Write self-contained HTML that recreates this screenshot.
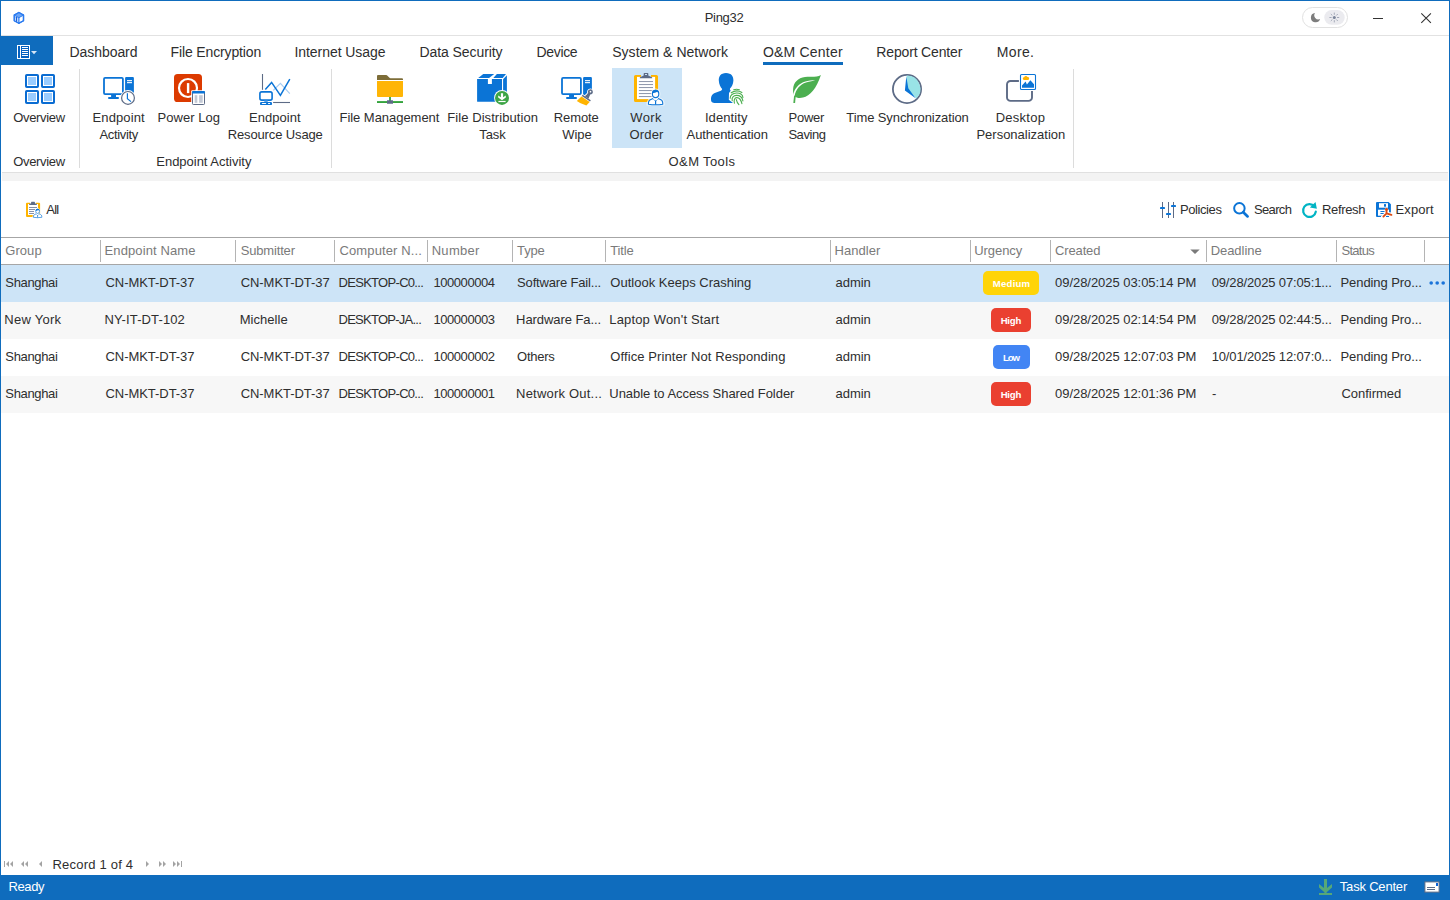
<!DOCTYPE html>
<html><head><meta charset="utf-8"><title>Ping32</title>
<style>
html,body{margin:0;padding:0;}
body{width:1450px;height:900px;position:relative;overflow:hidden;background:#fff;font-family:"Liberation Sans",sans-serif;}
.b{position:absolute;}
.t{position:absolute;white-space:nowrap;line-height:20px;height:20px;}
.i{position:absolute;overflow:visible;}
.vs{position:absolute;width:1px;background:#dcdcdc;top:69px;height:99px;}
.hs{position:absolute;width:1px;background:#b4b4b4;top:240px;height:22px;}
</style></head><body>
<!-- window frame -->
<div class="b" style="left:0;top:0;width:1450px;height:1px;background:#0f6cbd"></div>
<div class="b" style="left:0;top:0;width:1px;height:900px;background:#0f6cbd"></div>
<div class="b" style="left:1449px;top:0;width:1px;height:900px;background:#0f6cbd"></div>
<!-- title separator -->
<div class="b" style="left:1px;top:35px;width:1448px;height:1px;background:#e2e2e2"></div>
<!-- menu button -->
<div class="b" style="left:1px;top:36px;width:52px;height:29px;background:#0f6cbd"></div>
<!-- active tab underline -->
<div class="b" style="left:763px;top:62px;width:80px;height:3px;background:#0f6cbd"></div>
<!-- ribbon -->
<div class="b" style="left:612px;top:68px;width:70px;height:80px;background:#cce4f7"></div>
<div class="vs" style="left:79px"></div><div class="vs" style="left:331px"></div><div class="vs" style="left:1073px"></div>
<div class="b" style="left:2px;top:172px;width:1446px;height:1px;background:#e0e0e0"></div>
<div class="b" style="left:2px;top:173px;width:1446px;height:8px;background:#f3f3f3"></div>
<!-- grid -->
<div class="b" style="left:1px;top:237px;width:1448px;height:1px;background:#a6a6a6"></div>
<div class="b" style="left:1px;top:264px;width:1448px;height:1px;background:#a6a6a6"></div>
<div class="hs" style="left:100px"></div><div class="hs" style="left:235px"></div><div class="hs" style="left:334px"></div>
<div class="hs" style="left:427px"></div><div class="hs" style="left:512px"></div><div class="hs" style="left:605px"></div>
<div class="hs" style="left:830px"></div><div class="hs" style="left:970px"></div><div class="hs" style="left:1050px"></div>
<div class="hs" style="left:1206px"></div><div class="hs" style="left:1336px"></div><div class="hs" style="left:1424px"></div>
<div class="b" style="left:1px;top:265px;width:1448px;height:37px;background:#cde4f7"></div>
<div class="b" style="left:1px;top:302px;width:1448px;height:37px;background:#f7f7f7"></div>
<div class="b" style="left:1px;top:376px;width:1448px;height:37px;background:#f7f7f7"></div>
<!-- badges -->
<div class="b" style="left:983px;top:271px;width:56px;height:24px;border-radius:5px;background:#ffd408"></div>
<div class="b" style="left:991px;top:308px;width:40px;height:24px;border-radius:5px;background:#ea4030"></div>
<div class="b" style="left:993px;top:345px;width:37px;height:24px;border-radius:5px;background:#4285f4"></div>
<div class="b" style="left:991px;top:382px;width:40px;height:24px;border-radius:5px;background:#ea4030"></div>
<!-- status bar -->
<div class="b" style="left:0;top:875px;width:1450px;height:25px;background:#0f6cbd"></div>
<svg class="i" style="left:0;top:0" width="1450" height="900" viewBox="0 0 1450 900"><g fill="none" stroke="#2b7bf0" stroke-width="1.3" stroke-linejoin="round" stroke-linecap="round">
<path d="M18.9 12.5 L23.5 15.1 V20.7 L18.9 23.3 L14.3 20.7 V15.1 Z" fill="#fff"/>
<path d="M18.9 12.5 L23.5 15.1 L18.9 17.7 L14.3 15.1 Z" fill="#6aa5f6" stroke="none"/>
<path d="M14.3 15.1 L18.9 17.7 V23.3 L14.3 20.7 Z" fill="#c9defc" stroke="none"/>
<path d="M18.9 12.5 L23.5 15.1 V20.7 L18.9 23.3 L14.3 20.7 V15.1 Z"/>
<path d="M14.3 15.1 L18.9 17.7 L23.5 15.1" stroke-width="1"/>
<path d="M18.9 17.7 V23.3" stroke-width="1.2"/>
<path d="M16.5 17.2 V21.2" stroke="#1c62d8" stroke-width="1.1"/>
</g>
<g>
<rect x="17.5" y="45.5" width="12" height="13" fill="#0561c0" stroke="#fff" stroke-width="1"/>
<rect x="20" y="46" width="1" height="12" fill="#fff"/>
<g fill="#fff"><rect x="22" y="47" width="6" height="1"/><rect x="22" y="49" width="6" height="1"/><rect x="22" y="51" width="6" height="1"/><rect x="22" y="53" width="6" height="1"/><rect x="22" y="55" width="6" height="1"/></g>
<path d="M31 51 H37 L34 54.2 Z" fill="#d7e6f6"/>
</g>
<rect x="26" y="75" width="12" height="12" rx="0.8" fill="#fff" stroke="#0a6cd2" stroke-width="2"/><rect x="28" y="77" width="8" height="8" fill="#99ccff"/>
<rect x="42" y="75" width="12" height="12" rx="0.8" fill="#fff" stroke="#0a6cd2" stroke-width="2"/><rect x="44" y="77" width="8" height="8" fill="#99ccff"/>
<rect x="26" y="91" width="12" height="12" rx="0.8" fill="#fff" stroke="#0a6cd2" stroke-width="2"/><rect x="28" y="93" width="8" height="8" fill="#99ccff"/>
<rect x="42" y="91" width="12" height="12" rx="0.8" fill="#fff" stroke="#0a6cd2" stroke-width="2"/><rect x="44" y="93" width="8" height="8" fill="#99ccff"/>
<g transform="translate(0 0)">
<rect x="104" y="77.9" width="18.9" height="16.2" rx="1.1" fill="#fff" stroke="#0b74d6" stroke-width="1.8"/>
<rect x="111.1" y="94.5" width="4.9" height="3" fill="#0b74d6"/>
<rect x="108" y="97" width="11" height="2" rx="1" fill="#0b74d6"/>
<rect x="125.1" y="77" width="8.8" height="18" rx="1" fill="#0b74d6"/>
<rect x="127" y="80.1" width="5" height="1.1" fill="#fff"/><rect x="127" y="82.1" width="5" height="1.1" fill="#fff"/>
</g>
<circle cx="128" cy="97.9" r="7.8" fill="#fff"/>
<circle cx="128" cy="97.9" r="6.4" fill="#fff" stroke="#5d6b86" stroke-width="1.2"/>
<path d="M127.4 93.2 V98.6 L131 101.6" fill="none" stroke="#0b74d6" stroke-width="1.2" stroke-linejoin="miter"/>
<rect x="174" y="74" width="28" height="28" rx="3.6" fill="#dc3a00"/>
<circle cx="188" cy="88" r="9" fill="none" stroke="#fff" stroke-width="2.2"/>
<rect x="186.9" y="83.1" width="2.4" height="10" fill="#fff"/>
<rect x="191.2" y="90.2" width="14.4" height="15.4" rx="1" fill="#fff"/>
<rect x="192.5" y="91.5" width="12" height="13" rx="0.8" fill="#fff" stroke="#5d6b86" stroke-width="1"/>
<path d="M192 92 q0 -1 1 -1 h11 q1 0 1 1 v1.6 h-13 Z" fill="#0b74d6"/>
<rect x="194.7" y="95.2" width="2.6" height="7.6" fill="#c3c9d5"/><rect x="199.1" y="95.2" width="3.6" height="7.6" fill="#c3c9d5"/>
<path d="M262.5 74 V89.8" stroke="#5d6b86" stroke-width="1.1"/>
<path d="M273.1 102.5 H290" stroke="#5d6b86" stroke-width="1.1"/>
<path d="M273.3 90.4 L280.4 83.3 L289.8 93.6" fill="none" stroke="#a9cdf2" stroke-width="1.2"/>
<path d="M265.3 89.6 L271.6 82.4 L280.4 95.3 L289.8 79.1" fill="none" stroke="#0b74d6" stroke-width="1.5" stroke-linejoin="miter"/>
<rect x="259.9" y="91.9" width="12.2" height="8.2" rx="1.8" fill="#fff" stroke="#0b74d6" stroke-width="1.6"/>
<rect x="264.3" y="100.5" width="3.4" height="1.6" fill="#5ba3e8"/>
<rect x="260" y="102" width="12" height="3.1" rx="1.2" fill="#0b74d6"/>
<rect x="261.8" y="103.1" width="4.4" height="1" rx=".5" fill="#fff"/><rect x="268" y="103.1" width="2.2" height="1" rx=".5" fill="#fff"/>
<path d="M377 76.1 q0 -1 1 -1 h8.3 q.5 0 .9 .4 l2.3 2.3 q.4 .4 .9 .4 h11.6 q1 0 1 1 v.7 H377 Z" fill="#7d6d38"/>
<path d="M377 81.1 H403 V95.9 q0 1 -1 1 H378 q-1 0 -1 -1 Z" fill="#ffb506"/>
<rect x="389.1" y="97" width="1.8" height="4" fill="#34a33c"/>
<rect x="377" y="101.1" width="26" height="1.9" fill="#34a33c"/>
<rect x="387" y="100.2" width="6" height="3.6" rx=".4" fill="#5d6b86"/>
<path d="M477.1 79.1 H487.9 V84 H491.9 V79.1 H502 V101.8 H477.6 q-.5 0 -.5 -.5 Z" fill="#0b74d6"/>
<path d="M478.2 77.9 L483.3 74.1 H494.2 L489.1 77.9 Z" fill="#0b74d6"/>
<path d="M493.3 77.9 L496.9 74.1 H506 L502.7 77.9 Z" fill="#0b74d6"/>
<path d="M503.1 79.3 L506.9 75.3 V95 H503.1 Z" fill="#0b74d6"/>
<circle cx="502" cy="97.9" r="7.9" fill="#fff"/>
<circle cx="502" cy="97.9" r="7" fill="#3da546"/>
<path d="M500.9 93.3 H503.1 V97.2 L505.8 95.6 V97.6 L502 100.3 L498.2 97.6 V95.6 L500.9 97.2 Z" fill="#fff"/>
<rect x="498.4" y="100.9" width="7.2" height="1.2" fill="#fff"/>
<g transform="translate(458 0)">
<rect x="104" y="77.9" width="18.9" height="16.2" rx="1.1" fill="#fff" stroke="#0b74d6" stroke-width="1.8"/>
<rect x="111.1" y="94.5" width="4.9" height="3" fill="#0b74d6"/>
<rect x="108" y="97" width="11" height="2" rx="1" fill="#0b74d6"/>
<rect x="125.1" y="77" width="8.8" height="18" rx="1" fill="#0b74d6"/>
<rect x="127" y="80.1" width="5" height="1.1" fill="#fff"/><rect x="127" y="82.1" width="5" height="1.1" fill="#fff"/>
</g>
<g transform="translate(586.3 98.15) rotate(33)">
<path d="M-5.6 -1.4 H5.6 V1 L5 7 L-7 8.2 Z" fill="#fff"/>
<path d="M-2.2 -0.7 C-2 -2.6 -1.2 -3.6 -1.4 -5.6 A2.4 2.4 0 1 1 1.4 -5.6 C1.2 -3.6 2 -2.6 2.2 -0.7 Z" fill="#5d6b86" stroke="#fff" stroke-width="1.8" paint-order="stroke"/>
<path d="M-4.9 -0.75 H4.9 V0.7 H-4.9 Z" fill="#5d6b86"/>
<circle cx="0" cy="-7.7" r="0.85" fill="#fff"/>
<path d="M-4.9 1.3 H4.9 L4.1 6.2 Q2 6.2 0 6.9 T-6.4 7.5 Z" fill="#ffb400"/>
</g>
<g transform="translate(634 73) scale(1)"><path d="M1.6 1.9 H7 V3.9 H17 V1.9 H22.4 q1.6 0 1.6 1.6 V27.4 q0 1.6 -1.6 1.6 H1.6 q-1.6 0 -1.6 -1.6 V3.5 q0 -1.6 1.6 -1.6Z" fill="#ffb400"/><rect x="3" y="3.9" width="18.1" height="22.2" fill="#fff"/><path d="M10.3 0 h3.4 q.6 0 .6 .6 v2 l3.6 1.7 q.3 .15 .3 .5 v.4 h-12.4 v-.4 q0 -.35 .3 -.5 l3.6 -1.7 v-2 q0 -.6 .6 -.6z M11 1 v1 h2 v-1z" fill="#5d6b86" fill-rule="evenodd"/><rect x="4.9" y="8.10" width="14.1" height="0.95" fill="#8790a6"/><rect x="4.9" y="11.10" width="14.1" height="0.95" fill="#8790a6"/><rect x="4.9" y="14.10" width="14.1" height="0.95" fill="#8790a6"/><rect x="4.9" y="17.10" width="14.1" height="0.95" fill="#8790a6"/><rect x="4.9" y="20.10" width="14.1" height="0.95" fill="#8790a6"/><rect x="4.9" y="23.10" width="14.1" height="0.95" fill="#8790a6"/></g>
<g transform="translate(655.6 94) scale(1)">
<path d="M-8.4 10.8 C-8.6 6 -6.5 5 -2.6 3.6 C-5 1.6 -5 -5 0 -5 C5 -5 5 1.6 2.6 3.6 C6.5 5 8.6 6 8.4 10.8 Z" fill="#fff" stroke="#fff" stroke-width="1.2" opacity=".7"/>
<path d="M-7.2 10.2 C-7.4 6.4 -6 5.6 -2.4 4.4 L0 7 L2.4 4.4 C6 5.6 7.4 6.4 7.2 10.2 Q0 11.4 -7.2 10.2 Z" fill="#fff" stroke="#0b74d6" stroke-width="1.1" stroke-linejoin="round"/>
<path d="M-2.6 4.6 L0 7.2 L2.6 4.6 L2.2 2.6 H-2.2 Z" fill="#fff"/>
<path d="M0 6.4 V10.6" stroke="#0b74d6" stroke-width="1.2"/>
<ellipse cx="0" cy="0" rx="3.2" ry="3.6" fill="#fff" stroke="#0b74d6" stroke-width="1.1"/>
<path d="M-3.3 -0.6 C-3.6 -3 -2 -4.2 0 -4.2 C2 -4.2 3.6 -3 3.3 -0.6 C2.6 -1.2 2 -2 1.6 -2.2 C0.6 -1.4 -1.6 -1 -3.3 -0.6 Z" fill="#0b74d6"/>
</g>
<path d="M27 202.8 H30 V204 H36 V202.8 H39.1 q1 0 1 1 V216.1 q0 1 -1 1 H27 q-1 0 -1 -1 V203.8 q0 -1 1 -1Z" fill="#ffb400"/>
<rect x="28" y="204" width="10" height="11" fill="#fff"/>
<path d="M31.6 201.7 h2.8 q.5 0 .5 .5 v1 l1.9 .9 v.9 h-7.6 v-.9 l1.9 -.9 v-1 q0 -.5 .5 -.5z" fill="#5d6b86"/>
<g fill="#8790a6"><rect x="29" y="207" width="8" height="1"/><rect x="29" y="209" width="6" height="1"/><rect x="29" y="211" width="5" height="1"/><rect x="29" y="213" width="5" height="1"/></g>
<g transform="translate(37.6 211.3) scale(0.59)">
<path d="M-8.4 10.8 C-8.6 6 -6.5 5 -2.6 3.6 C-5 1.6 -5 -5 0 -5 C5 -5 5 1.6 2.6 3.6 C6.5 5 8.6 6 8.4 10.8 Z" fill="#fff" stroke="#fff" stroke-width="1.2" opacity=".7"/>
<path d="M-7.2 10.2 C-7.4 6.4 -6 5.6 -2.4 4.4 L0 7 L2.4 4.4 C6 5.6 7.4 6.4 7.2 10.2 Q0 11.4 -7.2 10.2 Z" fill="#fff" stroke="#0b74d6" stroke-width="1.1" stroke-linejoin="round"/>
<path d="M-2.6 4.6 L0 7.2 L2.6 4.6 L2.2 2.6 H-2.2 Z" fill="#fff"/>
<path d="M0 6.4 V10.6" stroke="#0b74d6" stroke-width="1.2"/>
<ellipse cx="0" cy="0" rx="3.2" ry="3.6" fill="#fff" stroke="#0b74d6" stroke-width="1.1"/>
<path d="M-3.3 -0.6 C-3.6 -3 -2 -4.2 0 -4.2 C2 -4.2 3.6 -3 3.3 -0.6 C2.6 -1.2 2 -2 1.6 -2.2 C0.6 -1.4 -1.6 -1 -3.3 -0.6 Z" fill="#0b74d6"/>
</g>
<path d="M726 72.9 C731.5 72.9 733.6 76.5 733.4 80.5 C733.2 84.5 731.5 87 730 88.6 C729.6 90 730.3 90.6 732 91.2 L733 103 H714.2 C711.5 103 710.8 101.2 711 98.6 C711.3 94.6 713.5 93.3 717.5 92 C720.5 91 722 90.6 722.2 89 C720.5 87 719 84.5 718.8 80.5 C718.6 76.5 720.6 72.9 726 72.9 Z" fill="#0b74d6"/>
<path d="M733 87.6 H740.4 L744.4 93 V102.5 L739.5 106.2 L735 104.6 L728.8 99.8 L729 93 Z" fill="#fff"/>
<g fill="none" stroke="#4caf50" stroke-width="1.1" stroke-linecap="round">
<path d="M733.7 89.7 Q736.5 88.9 739.4 89.7"/>
<path d="M731.2 92.8 Q736.6 89.2 741.9 92.5"/>
<path d="M730.2 98.3 C729.6 91.8 743 91 742.9 97.6"/>
<path d="M732.2 100.7 C730.6 94 741.4 93.2 742.9 100.9"/>
<path d="M734.4 103.2 C732.6 96.4 739.8 95 741.9 103.6"/>
<path d="M736.3 99.6 Q737 102.6 738.9 104.7"/>
</g>
<path d="M820.9 74.9 C817 77.6 811 76.3 805 76.9 C798 77.6 793.4 82.5 793.1 89 C793 91 793.1 92.4 793.4 93.3 L794.5 96.3 C796.5 98.2 800 98.5 803 97.6 C810 95.6 816.5 88.5 820.9 74.9 Z" fill="#4caf50"/>
<path d="M795.9 94.6 L795.1 102.9 H793.3 L794.3 94 Z" fill="#4caf50"/>
<path d="M794.6 96.2 C795.6 89.6 800 84.4 806 82.5 C810 81.3 813 80.9 815.2 80.2 C812 80.2 808 80.6 805.4 81.4 C799 83.3 794.4 88.5 793.5 94 Z" fill="#fff"/>
<circle cx="907" cy="89" r="14.1" fill="#fff" stroke="#5d6b86" stroke-width="1.8"/>
<path d="M906.6 75.6 A13.4 13.4 0 0 1 916.4 98.5 L907 89.6 Z" fill="#99e3e6"/>
<path d="M906.3 76.6 L908.3 88.3 L915.6 98.2 L904.9 90.6 Z" fill="#0b74d6"/>
<path d="M1018.9 81 H1010.5 a3.5 3.5 0 0 0 -3.5 3.5 V97.4 a3.5 3.5 0 0 0 3.5 3.5 H1028.5 a3.5 3.5 0 0 0 3.5 -3.5 V91.1" fill="none" stroke="#5d6b86" stroke-width="1.9"/>
<rect x="1020.5" y="74.5" width="15" height="15" rx="1" fill="#fff" stroke="#0b74d6" stroke-width="1.1"/>
<path d="M1024 79.9 a1.3 1.3 0 0 1 .2 -2.6 a1.8 1.8 0 0 1 3.3 -.3 a1.45 1.45 0 0 1 .4 2.9 Z" fill="#ffb400"/>
<path d="M1022 87.8 V85.5 L1025.6 81.6 L1026.9 84.4 L1030.4 80.2 L1034 84.3 V87.8 Z" fill="#0b74d6"/>
<g fill="#5d6b86"><rect x="1162" y="202" width="1" height="16"/><rect x="1168" y="202" width="1" height="16"/><rect x="1173" y="202" width="1" height="16"/></g>
<g fill="#0b74d6"><rect x="1160" y="207" width="5" height="2" rx=".4"/><rect x="1166" y="213" width="5" height="2" rx=".4"/><rect x="1171" y="205" width="5" height="2" rx=".4"/></g>
<circle cx="1239.4" cy="208.3" r="5.25" fill="none" stroke="#0b74d6" stroke-width="2"/>
<path d="M1243.3 212.3 L1247.6 216.4" stroke="#0b74d6" stroke-width="2.7" stroke-linecap="round"/>
<path d="M1314.4 206.4 A6.4 6.4 0 1 0 1315.8 211.7" fill="none" stroke="#00b4c4" stroke-width="2.2" stroke-linecap="round"/>
<path d="M1315.5 202 L1316.9 208.7 L1309.9 207.5 Z" fill="#00b4c4"/>
<path d="M1377 202 H1388.6 L1390.9 204.3 V212.6 H1389 V216.9 H1386 V216 H1381 V216.9 H1377 q-1 0 -1 -1 V203 q0 -1 1 -1Z" fill="#0b74d6"/>
<rect x="1379" y="203.2" width="9" height="4.5" fill="#fff"/><rect x="1384" y="204.1" width="2" height="2.6" fill="#0b74d6"/>
<rect x="1378" y="209.7" width="11" height="6" fill="#fff"/>
<rect x="1380.3" y="211" width="4.5" height="1" rx=".5" fill="#0b74d6"/><rect x="1380.3" y="213" width="3.5" height="1" rx=".5" fill="#0b74d6"/>
<rect x="1386" y="216" width="3" height="0.9" fill="#0b74d6"/>
<g stroke="#fff" stroke-width="3.4" stroke-linecap="round" fill="none"><path d="M1386.5 209.6 V213.4 L1383.4 216.6 M1386.5 213.4 L1391.4 214.9"/></g>
<g stroke="#dc4a12" stroke-width="1.9" stroke-linecap="round" fill="none"><path d="M1386.5 209.4 V213.4 L1383.4 216.6 M1386.5 213.4 L1391.4 214.9"/></g>
<circle cx="1386.5" cy="209.4" r="1.4" fill="#dc4a12"/>
<path d="M1190.3 249.4 H1199.7 L1195 254 Z" fill="#7a7a7a"/>
<g fill="#1a73d9"><circle cx="1431.2" cy="283" r="1.8"/><circle cx="1437.2" cy="283" r="1.8"/><circle cx="1443.2" cy="283" r="1.8"/></g>
<g fill="#a3a3a3"><rect x="4" y="861" width="1" height="6"/><path d="M6 864 L9 861 V867 Z"/><path d="M10 864 L13 861 V867 Z"/><path d="M21 864 L24 861 V867 Z"/><path d="M25 864 L28 861 V867 Z"/><path d="M39 864 L42 861 V867 Z"/><path d="M149 864 L146 861 V867 Z"/><path d="M162 864 L159 861 V867 Z"/><path d="M166 864 L163 861 V867 Z"/><path d="M176 864 L173 861 V867 Z"/><path d="M180 864 L177 861 V867 Z"/><rect x="181" y="861" width="1" height="6"/></g>
<path d="M1324 879 H1327 V888 L1332 884 V887.6 L1326.6 892.2 V893 H1332 V895 H1319 V893 H1324.4 V892.2 L1319 887.6 V884 L1324 888 Z" fill="#56a878"/>
<rect x="1424.9" y="881.9" width="14.2" height="10.2" fill="#fff" stroke="#5d6b86" stroke-width="1"/>
<rect x="1436" y="883" width="2" height="3" fill="#0b62d6"/>
<rect x="1427" y="887" width="8" height="1" fill="#5d6b86"/><rect x="1427" y="889" width="8" height="1" fill="#5d6b86"/>
<rect x="1302.5" y="7.5" width="45" height="20" rx="10" fill="#fff" stroke="#e1e1e1" stroke-width="1"/>
<rect x="1324.3" y="10.1" width="20.4" height="14.7" rx="7.35" fill="#ebebef"/>
<path d="M1315.05 12.94 A4.7 4.7 0 1 0 1320.07 19.04 A4.1 4.1 0 0 1 1315.05 12.94 Z" fill="#7d7d7d"/>
<circle cx="1334.3" cy="17.5" r="1.5" fill="#7a8499"/>
<g stroke="#9098aa" stroke-width=".8" stroke-linecap="round">
<path d="M1334.3 13 V14.4 M1334.3 20.6 V22 M1329.8 17.5 H1331.2 M1337.4 17.5 H1338.8 M1331.1 14.3 L1332.1 15.3 M1336.5 19.7 L1337.5 20.7 M1331.1 20.7 L1332.1 19.7 M1336.5 15.3 L1337.5 14.3"/></g>
<rect x="1373" y="18" width="10" height="1" fill="#333"/>
<path d="M1421.3 13.3 L1430.9 22.9 M1430.9 13.3 L1421.3 22.9" stroke="#333" stroke-width="1.1"/></svg>
<span class="t" style="left:704.70px;top:7.50px;font-size:13px;letter-spacing:-0.310px;color:#2e2e2e;">Ping32</span>
<span class="t" style="left:69.50px;top:42.15px;font-size:14px;letter-spacing:-0.063px;color:#2e2e2e;">Dashboard</span>
<span class="t" style="left:170.60px;top:42.15px;font-size:14px;letter-spacing:-0.136px;color:#2e2e2e;">File Encryption</span>
<span class="t" style="left:294.40px;top:42.15px;font-size:14px;letter-spacing:-0.050px;color:#2e2e2e;">Internet Usage</span>
<span class="t" style="left:419.50px;top:42.15px;font-size:14px;letter-spacing:-0.078px;color:#2e2e2e;">Data Security</span>
<span class="t" style="left:536.60px;top:42.15px;font-size:14px;letter-spacing:-0.361px;color:#2e2e2e;">Device</span>
<span class="t" style="left:612.20px;top:42.15px;font-size:14px;letter-spacing:0.044px;color:#2e2e2e;">System &amp; Network</span>
<span class="t" style="left:763.00px;top:42.15px;font-size:14px;letter-spacing:0.196px;color:#2e2e2e;">O&amp;M Center</span>
<span class="t" style="left:876.30px;top:42.15px;font-size:14px;letter-spacing:-0.156px;color:#2e2e2e;">Report Center</span>
<span class="t" style="left:996.70px;top:42.15px;font-size:14px;letter-spacing:0.376px;color:#2e2e2e;">More.</span>
<span class="t" style="left:13.20px;top:107.50px;font-size:13px;letter-spacing:-0.327px;color:#2e2e2e;">Overview</span>
<span class="t" style="left:92.60px;top:107.50px;font-size:13px;letter-spacing:0.099px;color:#2e2e2e;">Endpoint</span>
<span class="t" style="left:99.40px;top:124.50px;font-size:13px;letter-spacing:-0.324px;color:#2e2e2e;">Activity</span>
<span class="t" style="left:157.50px;top:107.50px;font-size:13px;letter-spacing:0.035px;color:#2e2e2e;">Power Log</span>
<span class="t" style="left:248.90px;top:107.50px;font-size:13px;letter-spacing:0.070px;color:#2e2e2e;">Endpoint</span>
<span class="t" style="left:227.70px;top:124.50px;font-size:13px;letter-spacing:-0.131px;color:#2e2e2e;">Resource Usage</span>
<span class="t" style="left:339.50px;top:107.50px;font-size:13px;letter-spacing:-0.038px;color:#2e2e2e;">File Management</span>
<span class="t" style="left:447.30px;top:107.50px;font-size:13px;letter-spacing:0.065px;color:#2e2e2e;">File Distribution</span>
<span class="t" style="left:479.30px;top:124.50px;font-size:13px;letter-spacing:-0.077px;color:#2e2e2e;">Task</span>
<span class="t" style="left:553.70px;top:107.50px;font-size:13px;letter-spacing:-0.078px;color:#2e2e2e;">Remote</span>
<span class="t" style="left:562.20px;top:124.50px;font-size:13px;letter-spacing:0.004px;color:#2e2e2e;">Wipe</span>
<span class="t" style="left:630.30px;top:107.50px;font-size:13px;letter-spacing:0.369px;color:#2e2e2e;">Work</span>
<span class="t" style="left:629.60px;top:124.50px;font-size:13px;letter-spacing:0.125px;color:#2e2e2e;">Order</span>
<span class="t" style="left:704.90px;top:107.50px;font-size:13px;letter-spacing:0.084px;color:#2e2e2e;">Identity</span>
<span class="t" style="left:686.60px;top:124.50px;font-size:13px;letter-spacing:-0.082px;color:#2e2e2e;">Authentication</span>
<span class="t" style="left:788.50px;top:107.50px;font-size:13px;letter-spacing:-0.230px;color:#2e2e2e;">Power</span>
<span class="t" style="left:788.40px;top:124.50px;font-size:13px;letter-spacing:-0.444px;color:#2e2e2e;">Saving</span>
<span class="t" style="left:846.30px;top:107.50px;font-size:13px;letter-spacing:-0.105px;color:#2e2e2e;">Time Synchronization</span>
<span class="t" style="left:995.70px;top:107.50px;font-size:13px;letter-spacing:0.257px;color:#2e2e2e;">Desktop</span>
<span class="t" style="left:976.40px;top:124.50px;font-size:13px;letter-spacing:0.003px;color:#2e2e2e;">Personalization</span>
<span class="t" style="left:13.20px;top:151.50px;font-size:13px;letter-spacing:-0.327px;color:#2e2e2e;">Overview</span>
<span class="t" style="left:156.30px;top:151.50px;font-size:13px;letter-spacing:-0.019px;color:#2e2e2e;">Endpoint Activity</span>
<span class="t" style="left:668.60px;top:151.50px;font-size:13px;letter-spacing:0.379px;color:#2e2e2e;">O&amp;M Tools</span>
<span class="t" style="left:46.30px;top:199.50px;font-size:13px;letter-spacing:-0.780px;color:#2e2e2e;">All</span>
<span class="t" style="left:1180.00px;top:199.50px;font-size:13px;letter-spacing:-0.414px;color:#2e2e2e;">Policies</span>
<span class="t" style="left:1253.90px;top:199.50px;font-size:13px;letter-spacing:-0.632px;color:#2e2e2e;">Search</span>
<span class="t" style="left:1322.00px;top:199.50px;font-size:13px;letter-spacing:-0.348px;color:#2e2e2e;">Refresh</span>
<span class="t" style="left:1395.60px;top:199.50px;font-size:13px;letter-spacing:0.068px;color:#2e2e2e;">Export</span>
<span class="t" style="left:5.30px;top:240.50px;font-size:13px;letter-spacing:0.050px;color:#7a7a7a;">Group</span>
<span class="t" style="left:104.50px;top:240.50px;font-size:13px;letter-spacing:0.118px;color:#7a7a7a;">Endpoint Name</span>
<span class="t" style="left:240.70px;top:240.50px;font-size:13px;letter-spacing:-0.163px;color:#7a7a7a;">Submitter</span>
<span class="t" style="left:339.50px;top:240.50px;font-size:13px;letter-spacing:0.117px;color:#7a7a7a;">Computer N...</span>
<span class="t" style="left:431.70px;top:240.50px;font-size:13px;letter-spacing:0.299px;color:#7a7a7a;">Number</span>
<span class="t" style="left:517.10px;top:240.50px;font-size:13px;letter-spacing:-0.185px;color:#7a7a7a;">Type</span>
<span class="t" style="left:610.30px;top:240.50px;font-size:13px;letter-spacing:-0.137px;color:#7a7a7a;">Title</span>
<span class="t" style="left:834.60px;top:240.50px;font-size:13px;letter-spacing:0.034px;color:#7a7a7a;">Handler</span>
<span class="t" style="left:974.30px;top:240.50px;font-size:13px;letter-spacing:-0.085px;color:#7a7a7a;">Urgency</span>
<span class="t" style="left:1055.10px;top:240.50px;font-size:13px;letter-spacing:-0.153px;color:#7a7a7a;">Created</span>
<span class="t" style="left:1210.70px;top:240.50px;font-size:13px;letter-spacing:-0.055px;color:#7a7a7a;">Deadline</span>
<span class="t" style="left:1341.50px;top:240.50px;font-size:13px;letter-spacing:-0.731px;color:#7a7a7a;">Status</span>
<span class="t" style="left:5.30px;top:272.50px;font-size:13px;letter-spacing:-0.336px;color:#2e2e2e;">Shanghai</span>
<span class="t" style="left:105.50px;top:272.50px;font-size:13px;letter-spacing:-0.048px;color:#2e2e2e;">CN-MKT-DT-37</span>
<span class="t" style="left:240.70px;top:272.50px;font-size:13px;letter-spacing:-0.057px;color:#2e2e2e;">CN-MKT-DT-37</span>
<span class="t" style="left:338.50px;top:272.50px;font-size:13px;letter-spacing:-0.697px;color:#2e2e2e;">DESKTOP-C0...</span>
<span class="t" style="left:433.40px;top:272.50px;font-size:13px;letter-spacing:-0.430px;color:#2e2e2e;">100000004</span>
<span class="t" style="left:517.10px;top:272.50px;font-size:13px;letter-spacing:-0.172px;color:#2e2e2e;">Software Fail...</span>
<span class="t" style="left:610.30px;top:272.50px;font-size:13px;letter-spacing:0.006px;color:#2e2e2e;">Outlook Keeps Crashing</span>
<span class="t" style="left:835.60px;top:272.50px;font-size:13px;letter-spacing:-0.044px;color:#2e2e2e;">admin</span>
<span class="t" style="left:1055.10px;top:272.50px;font-size:13px;letter-spacing:-0.051px;color:#2e2e2e;">09/28/2025 03:05:14 PM</span>
<span class="t" style="left:1211.70px;top:272.50px;font-size:13px;letter-spacing:-0.139px;color:#2e2e2e;">09/28/2025 07:05:1...</span>
<span class="t" style="left:1340.50px;top:272.50px;font-size:13px;letter-spacing:-0.075px;color:#2e2e2e;">Pending Pro...</span>
<span class="t" style="left:4.30px;top:309.50px;font-size:13px;letter-spacing:0.249px;color:#2e2e2e;">New York</span>
<span class="t" style="left:104.50px;top:309.50px;font-size:13px;letter-spacing:0.122px;color:#2e2e2e;">NY-IT-DT-102</span>
<span class="t" style="left:239.70px;top:309.50px;font-size:13px;letter-spacing:0.035px;color:#2e2e2e;">Michelle</span>
<span class="t" style="left:338.50px;top:309.50px;font-size:13px;letter-spacing:-0.743px;color:#2e2e2e;">DESKTOP-JA...</span>
<span class="t" style="left:433.40px;top:309.50px;font-size:13px;letter-spacing:-0.430px;color:#2e2e2e;">100000003</span>
<span class="t" style="left:516.10px;top:309.50px;font-size:13px;letter-spacing:-0.066px;color:#2e2e2e;">Hardware Fa...</span>
<span class="t" style="left:609.30px;top:309.50px;font-size:13px;letter-spacing:0.158px;color:#2e2e2e;">Laptop Won't Start</span>
<span class="t" style="left:835.60px;top:309.50px;font-size:13px;letter-spacing:-0.044px;color:#2e2e2e;">admin</span>
<span class="t" style="left:1055.10px;top:309.50px;font-size:13px;letter-spacing:-0.051px;color:#2e2e2e;">09/28/2025 02:14:54 PM</span>
<span class="t" style="left:1211.70px;top:309.50px;font-size:13px;letter-spacing:-0.139px;color:#2e2e2e;">09/28/2025 02:44:5...</span>
<span class="t" style="left:1340.50px;top:309.50px;font-size:13px;letter-spacing:-0.075px;color:#2e2e2e;">Pending Pro...</span>
<span class="t" style="left:5.30px;top:346.50px;font-size:13px;letter-spacing:-0.336px;color:#2e2e2e;">Shanghai</span>
<span class="t" style="left:105.50px;top:346.50px;font-size:13px;letter-spacing:-0.048px;color:#2e2e2e;">CN-MKT-DT-37</span>
<span class="t" style="left:240.70px;top:346.50px;font-size:13px;letter-spacing:-0.057px;color:#2e2e2e;">CN-MKT-DT-37</span>
<span class="t" style="left:338.50px;top:346.50px;font-size:13px;letter-spacing:-0.697px;color:#2e2e2e;">DESKTOP-C0...</span>
<span class="t" style="left:433.40px;top:346.50px;font-size:13px;letter-spacing:-0.430px;color:#2e2e2e;">100000002</span>
<span class="t" style="left:517.10px;top:346.50px;font-size:13px;letter-spacing:-0.283px;color:#2e2e2e;">Others</span>
<span class="t" style="left:610.30px;top:346.50px;font-size:13px;letter-spacing:0.095px;color:#2e2e2e;">Office Printer Not Responding</span>
<span class="t" style="left:835.60px;top:346.50px;font-size:13px;letter-spacing:-0.044px;color:#2e2e2e;">admin</span>
<span class="t" style="left:1055.10px;top:346.50px;font-size:13px;letter-spacing:-0.051px;color:#2e2e2e;">09/28/2025 12:07:03 PM</span>
<span class="t" style="left:1211.70px;top:346.50px;font-size:13px;letter-spacing:-0.139px;color:#2e2e2e;">10/01/2025 12:07:0...</span>
<span class="t" style="left:1340.50px;top:346.50px;font-size:13px;letter-spacing:-0.075px;color:#2e2e2e;">Pending Pro...</span>
<span class="t" style="left:5.30px;top:383.50px;font-size:13px;letter-spacing:-0.336px;color:#2e2e2e;">Shanghai</span>
<span class="t" style="left:105.50px;top:383.50px;font-size:13px;letter-spacing:-0.048px;color:#2e2e2e;">CN-MKT-DT-37</span>
<span class="t" style="left:240.70px;top:383.50px;font-size:13px;letter-spacing:-0.057px;color:#2e2e2e;">CN-MKT-DT-37</span>
<span class="t" style="left:338.50px;top:383.50px;font-size:13px;letter-spacing:-0.697px;color:#2e2e2e;">DESKTOP-C0...</span>
<span class="t" style="left:433.40px;top:383.50px;font-size:13px;letter-spacing:-0.430px;color:#2e2e2e;">100000001</span>
<span class="t" style="left:516.10px;top:383.50px;font-size:13px;letter-spacing:0.203px;color:#2e2e2e;">Network Out...</span>
<span class="t" style="left:609.30px;top:383.50px;font-size:13px;letter-spacing:-0.046px;color:#2e2e2e;">Unable to Access Shared Folder</span>
<span class="t" style="left:835.60px;top:383.50px;font-size:13px;letter-spacing:-0.044px;color:#2e2e2e;">admin</span>
<span class="t" style="left:1055.10px;top:383.50px;font-size:13px;letter-spacing:-0.051px;color:#2e2e2e;">09/28/2025 12:01:36 PM</span>
<span class="t" style="left:1212.00px;top:383.50px;font-size:13px;letter-spacing:0.000px;color:#2e2e2e;">-</span>
<span class="t" style="left:1341.50px;top:383.50px;font-size:13px;letter-spacing:-0.042px;color:#2e2e2e;">Confirmed</span>
<span class="t" style="left:992.80px;top:273.67px;font-size:9.6px;letter-spacing:0.217px;color:#ffffff;font-weight:700;">Medium</span>
<span class="t" style="left:1000.70px;top:310.67px;font-size:9.6px;letter-spacing:-0.251px;color:#ffffff;font-weight:700;">High</span>
<span class="t" style="left:1002.90px;top:347.67px;font-size:9.6px;letter-spacing:-1.010px;color:#ffffff;font-weight:700;">Low</span>
<span class="t" style="left:1000.70px;top:384.67px;font-size:9.6px;letter-spacing:-0.251px;color:#ffffff;font-weight:700;">High</span>
<span class="t" style="left:52.50px;top:854.50px;font-size:13px;letter-spacing:0.207px;color:#2e2e2e;">Record 1 of 4</span>
<span class="t" style="left:8.40px;top:876.50px;font-size:13px;letter-spacing:-0.345px;color:#ffffff;">Ready</span>
<span class="t" style="left:1339.80px;top:876.50px;font-size:13px;letter-spacing:-0.193px;color:#ffffff;">Task Center</span>
</body></html>
